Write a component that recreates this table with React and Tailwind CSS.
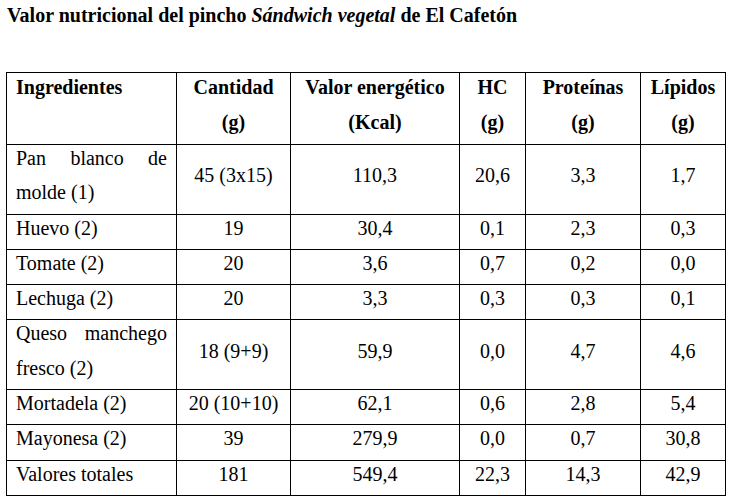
const rows = [
  { name: 'Pan blanco de molde (1)', qty: '45 (3x15)', kcal: '110,3', hc: '20,6', prot: '3,3', lip: '1,7' },
  { name: 'Huevo (2)', qty: '19', kcal: '30,4', hc: '0,1', prot: '2,3', lip: '0,3' },
  { name: 'Tomate (2)', qty: '20', kcal: '3,6', hc: '0,7', prot: '0,2', lip: '0,0' },
  { name: 'Lechuga (2)', qty: '20', kcal: '3,3', hc: '0,3', prot: '0,3', lip: '0,1' },
  { name: 'Queso manchego fresco (2)', qty: '18 (9+9)', kcal: '59,9', hc: '0,0', prot: '4,7', lip: '4,6' },
  { name: 'Mortadela (2)', qty: '20 (10+10)', kcal: '62,1', hc: '0,6', prot: '2,8', lip: '5,4' },
  { name: 'Mayonesa (2)', qty: '39', kcal: '279,9', hc: '0,0', prot: '0,7', lip: '30,8' },
  { name: 'Valores totales', qty: '181', kcal: '549,4', hc: '22,3', prot: '14,3', lip: '42,9' },
]

const headers = [
  ['Ingredientes', ''],
  ['Cantidad', '(g)'],
  ['Valor energético', '(Kcal)'],
  ['HC', '(g)'],
  ['Proteínas', '(g)'],
  ['Lípidos', '(g)'],
]

function Cell({ children, left }) {
  return (
    <td className={`border border-black px-[9px] p-0 align-middle font-['Liberation_Serif'] text-[20px] ${left ? 'text-justify' : 'text-center'}`}>
      <div className="-mt-1 pb-1 leading-[34.3px]">{children}</div>
    </td>
  )
}

export default function App() {
  return (
    <div className="w-[733px] h-[501px] bg-white text-black overflow-hidden font-['Liberation_Serif']">
      <div className="pl-[7px] pt-[3px] leading-[24px] text-[20px] font-bold whitespace-nowrap">
        Valor nutricional del pincho <i>Sándwich vegetal</i> de El Cafetón
      </div>

      <table className="ml-[6px] mt-[45px] w-[719px] table-fixed border-collapse">
        <colgroup>
          <col className="w-[170px]" />
          <col className="w-[114px]" />
          <col className="w-[169px]" />
          <col className="w-[66px]" />
          <col className="w-[115px]" />
          <col className="w-[85px]" />
        </colgroup>
        <thead>
          <tr>
            {headers.map(([top, bottom], i) => (
              <th key={top} className={`border border-black px-[9px] align-top text-[20px] font-['Liberation_Serif'] font-bold ${i === 0 ? 'text-left' : 'text-center'}`}>
                <div className="-mt-[3px] pb-1 leading-[35px]">
                  <div>{top}</div>
                  <div>{bottom || '\u00a0'}</div>
                </div>
              </th>
            ))}
          </tr>
        </thead>
        <tbody>
          {rows.map((r) => (
            <tr key={r.name}>
              <Cell left>{r.name}</Cell>
              <Cell>{r.qty}</Cell>
              <Cell>{r.kcal}</Cell>
              <Cell>{r.hc}</Cell>
              <Cell>{r.prot}</Cell>
              <Cell>{r.lip}</Cell>
            </tr>
          ))}
        </tbody>
      </table>
    </div>
  )
}
